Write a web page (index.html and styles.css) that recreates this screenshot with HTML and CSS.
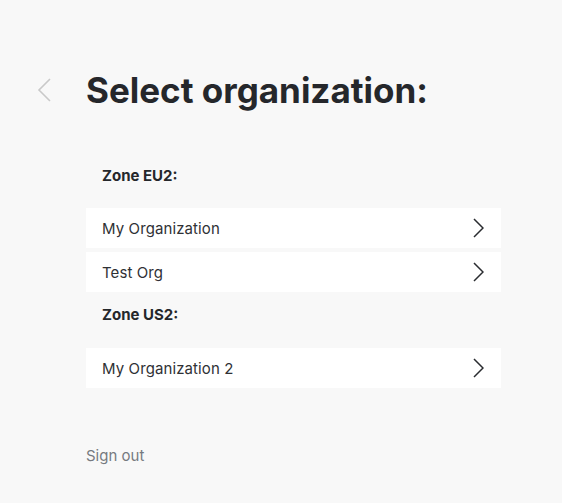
FILE: index.html
```html
<!DOCTYPE html>
<html>
<head>
<meta charset="utf-8">
<link rel="stylesheet" href="styles.css">
</head>
<body>
<div class="page">
  <div class="header">
    <button class="back" aria-label="Back">
      <svg width="14" height="24" viewBox="0 0 14 24"><path d="M13 1 L2 12 L13 23" fill="none" stroke="#c9c9c9" stroke-width="1.6"/></svg>
    </button>
    <h1 class="title">Select organization:</h1>
  </div>
  <div class="content">
    <div class="zone">Zone EU2:</div>
    <div class="list">
      <a class="row"><span>My Organization</span><svg class="chev" width="11" height="20" viewBox="0 0 11 20"><path d="M1 1 L10 10 L1 19" fill="none" stroke="#2a2c30" stroke-width="1.5"/></svg></a>
      <a class="row"><span>Test Org</span><svg class="chev" width="11" height="20" viewBox="0 0 11 20"><path d="M1 1 L10 10 L1 19" fill="none" stroke="#2a2c30" stroke-width="1.5"/></svg></a>
    </div>
    <div class="zone">Zone US2:</div>
    <div class="list">
      <a class="row"><span>My Organization 2</span><svg class="chev" width="11" height="20" viewBox="0 0 11 20"><path d="M1 1 L10 10 L1 19" fill="none" stroke="#2a2c30" stroke-width="1.5"/></svg></a>
    </div>
    <a class="signout">Sign out</a>
  </div>
</div>
</body>
</html>
```
FILE: styles.css
```css
html, body {
  margin: 0;
  padding: 0;
  background: #f8f8f8;
  font-family: Inter, "Noto Sans", sans-serif;
  color: #25272b;
}
.page {
  padding: 60px 61px 0 37px;
}
.header {
  display: flex;
  align-items: center;
  height: 60px;
}
.back {
  background: none;
  border: 0;
  padding: 0;
  margin: 0 35px 0 0;
  width: 14px;
  height: 24px;
  display: flex;
}
.title {
  margin: 0;
  font-size: 35px;
  font-weight: 700;
  color: #25272b;
}
.content {
  margin-left: 49px;
  display: flex;
  flex-direction: column;
}
.zone {
  font-size: 15px;
  font-weight: 700;
  padding: 0 16px;
  height: 20px;
  line-height: 20px;
  margin-top: 46px;
  margin-bottom: 22px;
}
.list + .zone {
  margin-top: 13px;
  margin-bottom: 23px;
}
.list {
  display: flex;
  flex-direction: column;
  gap: 4px;
}
.row {
  height: 40px;
  background: #fff;
  display: flex;
  align-items: center;
  justify-content: space-between;
  padding: 0 17px 0 16px;
  font-size: 15px;
  letter-spacing: 0.1px;
  color: #2f3135;
}
.chev {
  display: block;
}
.signout {
  margin-top: 58px;
  font-size: 15px;
  color: #767a80;
  line-height: 20px;
}
```
